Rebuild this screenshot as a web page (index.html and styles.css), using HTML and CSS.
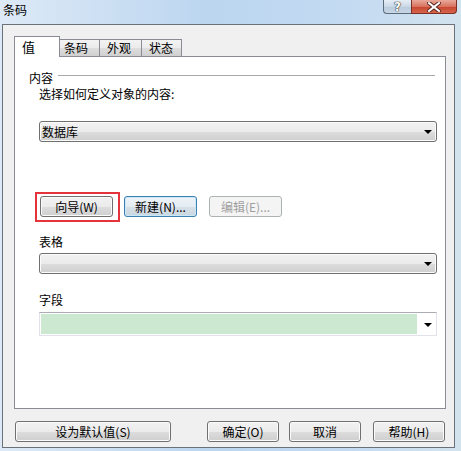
FILE: index.html
```html
<!DOCTYPE html>
<html lang="zh-CN">
<head>
    <meta charset="UTF-8">
    <title>条码</title>
    <link rel="stylesheet" href="styles.css">
</head>
<body>
    <div class="titlebar">
        <span class="title">条码</span>
        <div class="caption-btns">
            <span class="cap help">?</span>
            <span class="cap close">
                <svg width="14" height="10" viewBox="0 0 14 10">
                    <path d="M2 1 L12 9 M12 1 L2 9" stroke="#5a2a22" stroke-width="4" stroke-linecap="square"/>
                    <path d="M2 1 L12 9 M12 1 L2 9" stroke="#ffffff" stroke-width="2" stroke-linecap="square"/>
                </svg>
            </span>
        </div>
    </div>

    <div class="client">
        <div class="tabs">
            <div class="tab active">值</div>
            <div class="tab t2">条码</div>
            <div class="tab t3">外观</div>
            <div class="tab t4">状态</div>
        </div>

        <div class="panel">
            <div class="group-head">
                <span>内容</span>
                <i class="rule"></i>
            </div>
            <div class="prompt">选择如何定义对象的内容:</div>
            <div class="combo source">
                <span>数据库</span>
                <i class="arrow"></i>
            </div>

            <div class="btn-row">
                <span class="mark"><button class="btn">向导(W)</button></span>
                <button class="btn default">新建(N)...</button>
                <button class="btn" disabled>编辑(E)...</button>
            </div>

            <div class="field-label first">表格</div>
            <div class="combo"><span></span><i class="arrow"></i></div>

            <div class="field-label">字段</div>
            <div class="edit-combo">
                <span class="edit"></span>
                <i class="arrow"></i>
            </div>
        </div>

        <div class="footer">
            <button class="btn wide">设为默认值(S)</button>
            <button class="btn ok">确定(O)</button>
            <button class="btn cancel">取消</button>
            <button class="btn help-btn">帮助(H)</button>
        </div>
    </div>
</body>
</html>
```

FILE: styles.css
```css
body {
    margin: 0;
    width: 461px;
    height: 451px;
    overflow: hidden;
    font-family: "Noto Sans CJK SC", "Liberation Sans", sans-serif;
    font-size: 12px;
    color: #000;
    background: linear-gradient(to right, #dde9f6, #bcd6f0 45%, #c3daf2 75%, #d3e3ee);
}
.titlebar {
    height: 24px;
    display: flex;
    align-items: flex-start;
}
.title {
    padding: 3px 0 0 3px;
    line-height: 14px;
}
.caption-btns {
    margin-left: auto;
    margin-right: 4px;
    display: flex;
}
.cap {
    height: 14px;
    box-sizing: border-box;
    border: 1px solid #5b6b7c;
    border-top: none;
    display: flex;
    align-items: center;
    justify-content: center;
}
.help {
    width: 28px;
    border-radius: 0 0 0 4px;
    border-right: none;
    background: linear-gradient(#e6eef6, #cbd8e6 50%, #b9cadb 51%, #c9d7e6);
    color: #fff;
    font-family: "DejaVu Sans", sans-serif;
    font-weight: bold;
    font-size: 12px;
    line-height: 12px;
    text-shadow: 0 0 1px #333, 0 0 1px #333, 0 0 1px #333;
}
.close {
    width: 46px;
    border-radius: 0 0 4px 0;
    border-color: #7a3027;
    background: linear-gradient(#e9a99b, #d8735f 50%, #c7452f 51%, #d6654b);
}
.close svg {
    display: block;
}
.client {
    margin-left: 2px;
    width: 453px;
    height: 424px;
    box-sizing: border-box;
    border: 1px solid #6a7178;
    background: #f0f0f0;
    padding: 11px 8px 0 11px;
}
.tabs {
    display: flex;
    align-items: flex-end;
    height: 20px;
    position: relative;
    z-index: 1;
}
.tab {
    box-sizing: border-box;
    border: 1px solid #898c95;
    border-bottom: none;
    line-height: 14px;
    height: 17px;
    padding: 1px 0 0 6px;
    margin-left: -1px;
    background: linear-gradient(#f3f3f3, #ebebeb 50%, #dedede 51%, #d0d0d0);
}
.tab.active {
    margin-left: 0;
    width: 46px;
    height: 21px;
    margin-bottom: -1px;
    padding: 3px 0 0 7px;
    background: #fff;
    font-size: 13px;
}
.t2 { width: 41px; padding-left: 4px; }
.t3 { width: 43px; padding-left: 7px; }
.t4 { width: 41px; padding-left: 7px; }
.panel {
    position: relative;
    width: 432px;
    height: 353px;
    box-sizing: border-box;
    border: 1px solid #898c95;
    background: #fff;
    padding: 15px 0 0 0;
}
.group-head {
    display: flex;
    align-items: flex-start;
    height: 12px;
    line-height: 12px;
    padding-left: 14px;
}
.rule {
    flex: 1;
    height: 1px;
    margin: 3px 10px 0 5px;
    background: #a8a8a8;
}
.prompt {
    margin: 4px 0 0 24px;
    line-height: 12px;
}
.combo {
    margin: 21px 0 0 24px;
    width: 398px;
    height: 21px;
    box-sizing: border-box;
    border: 1px solid #707070;
    border-radius: 3px;
    background: linear-gradient(#f2f2f2, #ebebeb 50%, #dddddd 51%, #cfcfcf);
    box-shadow: inset 0 0 0 1px #fbfbfb;
    display: flex;
    align-items: center;
    padding: 0 4px 0 2px;
}
.combo span {
    flex: 1;
    line-height: 14px;
}
.arrow {
    width: 0;
    height: 0;
    border-left: 4px solid transparent;
    border-right: 4px solid transparent;
    border-top: 4px solid #000;
    margin-top: 1px;
}
.btn-row {
    display: flex;
    margin: 54px 0 0 25px;
    gap: 11px;
}
.btn {
    width: 73px;
    height: 21px;
    box-sizing: border-box;
    border: 1px solid #707070;
    border-radius: 3px;
    background: linear-gradient(#f2f2f2, #ebebeb 50%, #dddddd 51%, #cfcfcf);
    box-shadow: inset 0 0 0 1px #fbfbfb;
    font: inherit;
    color: #000;
    line-height: 14px;
    padding: 0;
}
.btn.default {
    border-color: #3c7fb1;
    box-shadow: inset 0 0 0 1px #c9e9fb;
    background: linear-gradient(#eef4f8, #e4ecf2 50%, #d6e0e8 51%, #cbd6df);
}
.btn[disabled] {
    border-color: #adb2b5;
    background: #f4f4f4;
    box-shadow: none;
    color: #a0a0a0;
    margin-left: 1px;
}
.mark {
    display: inline-flex;
    border: 2px solid #e5333b;
    padding: 2px 5px 3px 3px;
    margin: -4px -7px -5px -5px;
}
.field-label {
    margin: 20px 0 0 24px;
    line-height: 12px;
}
.field-label.first {
    margin-top: 19px;
}
.field-label + .combo {
    margin-top: 5px;
}
.edit-combo {
    margin: 6px 0 0 24px;
    width: 398px;
    height: 24px;
    box-sizing: border-box;
    border: 1px solid #e2e3ea;
    border-top-color: #abadb3;
    background: #fff;
    padding: 1px 4px 1px 1px;
    display: flex;
    align-items: center;
}
.edit {
    width: 377px;
    align-self: stretch;
    background: #cde8d1;
    margin-right: 7px;
}
.footer {
    display: flex;
    margin-top: 12px;
    padding-left: 1px;
}
.footer .btn {
    width: 72px;
}
.footer .wide {
    width: 156px;
}
.footer .ok {
    margin-left: 36px;
}
.footer .cancel {
    margin-left: 10px;
}
.footer .help-btn {
    margin-left: 12px;
}
```
